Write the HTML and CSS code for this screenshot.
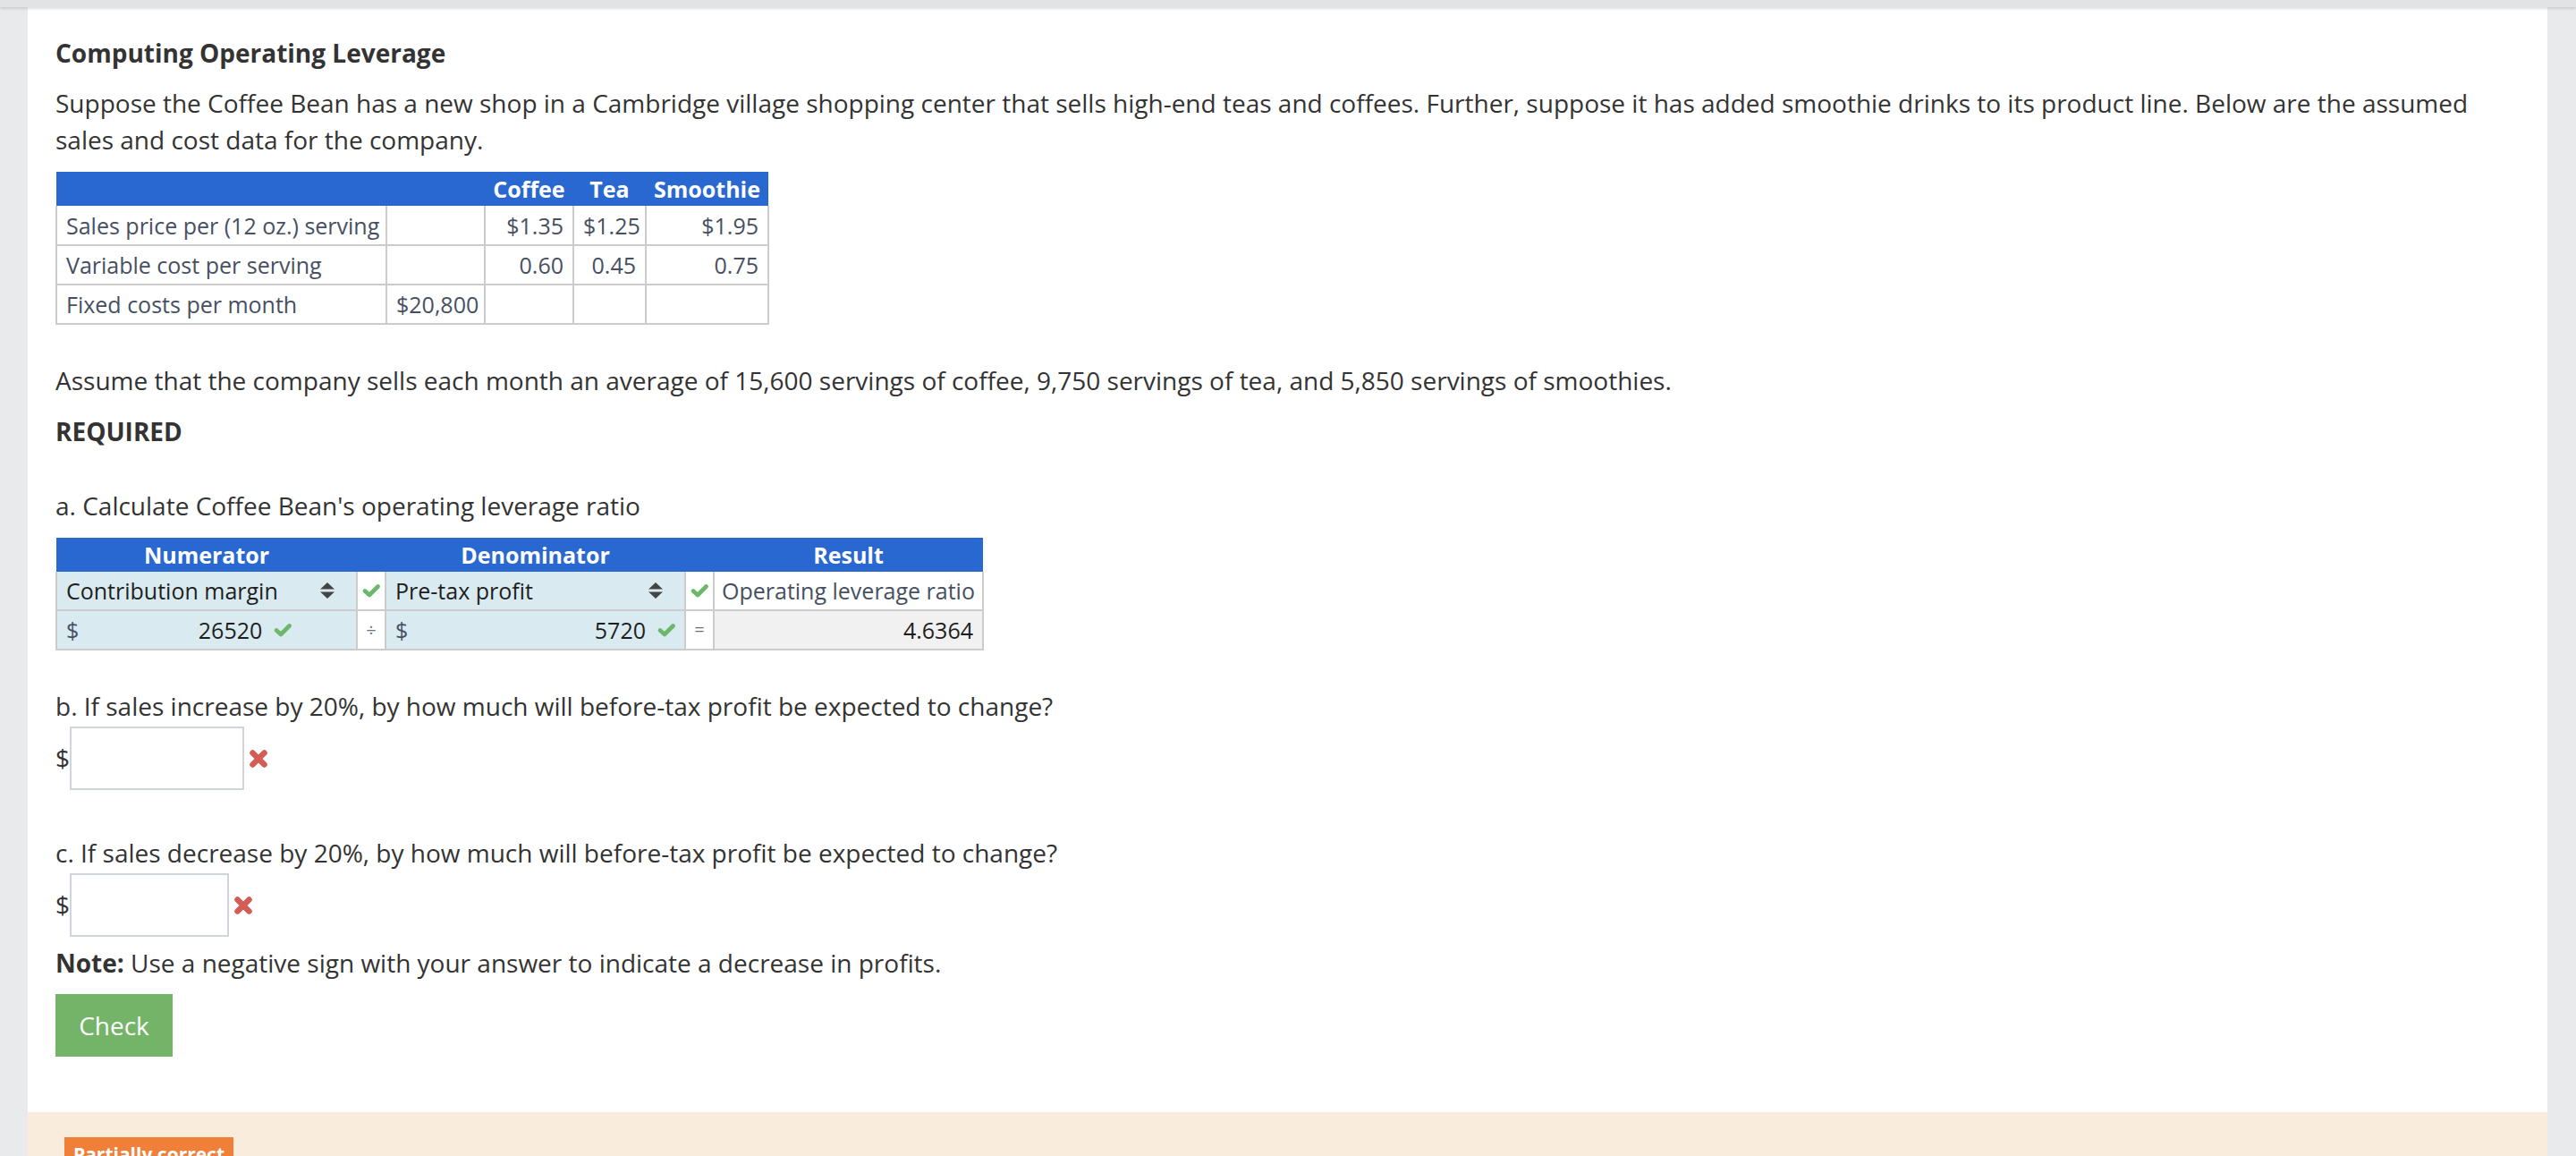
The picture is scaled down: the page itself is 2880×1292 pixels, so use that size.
FILE: index.html
```html
<!DOCTYPE html>
<html lang="en">
  <head>
    <meta charset="UTF-8" />
    <meta name="viewport" content="width=device-width, initial-scale=1.0" />
    <title>Computing Operating Leverage</title>

    <link rel="stylesheet" href="styles.css">
  </head>
  <body>
    <div class="topbar"></div>
    <div class="card">
      <h1 class="title">Computing Operating Leverage</h1>
      <p class="intro">
        Suppose the Coffee Bean has a new shop in a Cambridge village shopping center that sells high-end teas and
        coffees. Further, suppose it has added smoothie drinks to its product line. Below are the assumed sales and
        cost data for the company.
      </p>

      <table class="data">
        <colgroup>
          <col class="data__label" />
          <col class="data__fixed" />
          <col class="data__coffee" />
          <col class="data__tea" />
          <col class="data__smoothie" />
        </colgroup>
        <thead>
          <tr>
            <th></th>
            <th></th>
            <th>Coffee</th>
            <th>Tea</th>
            <th>Smoothie</th>
          </tr>
        </thead>
        <tbody>
          <tr>
            <td>Sales price per (12 oz.) serving</td>
            <td></td>
            <td class="num">$1.35</td>
            <td class="num">$1.25</td>
            <td class="num">$1.95</td>
          </tr>
          <tr>
            <td>Variable cost per serving</td>
            <td></td>
            <td class="num">0.60</td>
            <td class="num">0.45</td>
            <td class="num">0.75</td>
          </tr>
          <tr>
            <td>Fixed costs per month</td>
            <td class="num">$20,800</td>
            <td></td>
            <td></td>
            <td></td>
          </tr>
        </tbody>
      </table>

      <p class="assume">
        Assume that the company sells each month an average of 15,600 servings of coffee, 9,750 servings of tea, and
        5,850 servings of smoothies.
      </p>
      <p class="required">REQUIRED</p>

      <p class="question question--a">a. Calculate Coffee Bean's operating leverage ratio</p>

      <table class="calc">
        <colgroup>
          <col class="calc__wide" />
          <col class="calc__op" />
          <col class="calc__wide2" />
          <col class="calc__op" />
          <col class="calc__result" />
        </colgroup>
        <thead>
          <tr>
            <th>Numerator</th>
            <th></th>
            <th>Denominator</th>
            <th></th>
            <th>Result</th>
          </tr>
        </thead>
        <tbody>
          <tr class="calc__labels">
            <td class="cell-input">
              <div class="select">
                <span>Contribution margin</span>
                <svg class="select__arrows" viewBox="0 0 16 18" width="16" height="18">
                  <polygon points="8,0 16,7.5 0,7.5" />
                  <polygon points="0,10.5 16,10.5 8,18" />
                </svg>
              </div>
            </td>
            <td class="cell-op">
              <svg class="check" viewBox="0 0 20 15" width="20" height="15">
                <path d="M3 7.5 L8 12 L17.5 2.5" />
              </svg>
            </td>
            <td class="cell-input">
              <div class="select">
                <span>Pre-tax profit</span>
                <svg class="select__arrows" viewBox="0 0 16 18" width="16" height="18">
                  <polygon points="8,0 16,7.5 0,7.5" />
                  <polygon points="0,10.5 16,10.5 8,18" />
                </svg>
              </div>
            </td>
            <td class="cell-op">
              <svg class="check" viewBox="0 0 20 15" width="20" height="15">
                <path d="M3 7.5 L8 12 L17.5 2.5" />
              </svg>
            </td>
            <td class="cell-result-label">Operating leverage ratio</td>
          </tr>
          <tr class="calc__values">
            <td class="cell-input">
              <div class="amount">
                <span class="amount__cur">$</span>
                <span class="amount__value amount__value--num">26520</span>
                <svg class="check" viewBox="0 0 20 15" width="20" height="15">
                  <path d="M3 7.5 L8 12 L17.5 2.5" />
                </svg>
              </div>
            </td>
            <td class="cell-op">÷</td>
            <td class="cell-input">
              <div class="amount">
                <span class="amount__cur">$</span>
                <span class="amount__value">5720</span>
                <svg class="check" viewBox="0 0 20 15" width="20" height="15">
                  <path d="M3 7.5 L8 12 L17.5 2.5" />
                </svg>
              </div>
            </td>
            <td class="cell-op">=</td>
            <td class="cell-result">4.6364</td>
          </tr>
        </tbody>
      </table>

      <p class="question question--b">b. If sales increase by 20%, by how much will before-tax profit be expected to change?</p>
      <div class="answer">
        <span class="answer__cur">$</span>
        <input class="answer__input" type="text" />
        <svg class="cross" viewBox="0 0 22 22" width="22" height="22">
          <path d="M4.5 4.5 L17.5 17.5 M17.5 4.5 L4.5 17.5" />
        </svg>
      </div>

      <p class="question question--c">c. If sales decrease by 20%, by how much will before-tax profit be expected to change?</p>
      <div class="answer answer--last">
        <span class="answer__cur">$</span>
        <input class="answer__input answer__input--short" type="text" />
        <svg class="cross" viewBox="0 0 22 22" width="22" height="22">
          <path d="M4.5 4.5 L17.5 17.5 M17.5 4.5 L4.5 17.5" />
        </svg>
      </div>

      <p class="note"><strong>Note:</strong> Use a negative sign with your answer to indicate a decrease in profits.</p>

      <div class="actions">
        <button class="button">Check</button>
      </div>

      <div class="feedback">
        <span class="badge">Partially correct</span>
      </div>
    </div>
  </body>
</html>
```

FILE: styles.css
```css
:root {
  --clr-page: #e9eaec;
  --clr-text: #333333;
  --clr-slate: #465062;
  --clr-blue: #2968d0;
  --clr-cell: #d9ebf1;
  --clr-border: #cccccc;
  --clr-green: #6cb86a;
  --clr-red: #d35d56;
}

* {
  margin: 0;
  box-sizing: border-box;
}

body {
  font-family: "Open Sans", "Noto Sans", sans-serif;
  font-size: 28px;
  line-height: 41px;
  color: var(--clr-text);
  background: var(--clr-page);
  overflow: hidden;
}

.topbar {
  height: 8px;
  background: #e2e3e5;
  box-shadow: 0 2px 3px rgba(0, 0, 0, 0.12);
  position: relative;
  z-index: 1;
}

.card {
  margin: 0 32px 0 31px;
  padding: 32px 31px 0;
  background: #fff;
  min-height: 1300px;
}

.title {
  font-size: 28px;
  line-height: 38px;
  font-weight: 700;
  margin-bottom: 17px;
}

.intro {
  margin-bottom: 15px;
}

/* data table */

table {
  border-collapse: collapse;
  table-layout: fixed;
}

th {
  background: var(--clr-blue);
  color: #fff;
  font-weight: 700;
  text-align: center;
  padding: 0 6px;
}

td {
  border: 2px solid var(--clr-border);
  padding: 0 10px;
  white-space: nowrap;
}

.data {
  width: 796px;
  font-size: 25px;
  line-height: 32px;
  color: var(--clr-slate);
  margin-bottom: 42px;
}

.data thead tr {
  height: 38px;
}

.data tbody tr {
  height: 44px;
}

.data tbody tr:first-child td {
  border-top: 0;
}

.data__label { width: 369px; }
.data__fixed { width: 110px; }
.data__coffee { width: 99px; }
.data__tea { width: 81px; }
.data__smoothie { width: 137px; }

.num {
  text-align: right;
}

.assume {
  margin-bottom: 16px;
}

.required {
  font-weight: 700;
  margin-bottom: 42px;
}

.question--a {
  margin-bottom: 15px;
}

/* calculation table */

.calc {
  width: 1036px;
  font-size: 25px;
  line-height: 32px;
  margin-bottom: 42px;
}

.calc thead tr {
  height: 38px;
}

.calc__labels {
  height: 43px;
}

.calc__values {
  height: 44px;
}

.calc tbody tr:first-child td {
  border-top: 0;
}

.calc__wide { width: 336px; }
.calc__op { width: 32px; }
.calc__wide2 { width: 335px; }
.calc__result { width: 301px; }

.cell-input {
  background: var(--clr-cell);
  color: #1e1e1e;
}

.cell-op {
  padding: 0;
  text-align: center;
  color: #6a7280;
  font-size: 20px;
}

.cell-op .check {
  display: block;
  margin: 0 auto;
}

.cell-result-label {
  color: var(--clr-slate);
  padding-left: 8px;
}

.cell-result {
  background: #f1f1f1;
  text-align: right;
  color: #1e1e1e;
}

.select {
  display: flex;
  align-items: center;
  justify-content: space-between;
  padding-right: 14px;
}

.select__arrows {
  fill: #444;
}

.check {
  fill: none;
  stroke: var(--clr-green);
  stroke-width: 4.6;
  stroke-linecap: round;
  stroke-linejoin: round;
}

.amount {
  display: flex;
  align-items: center;
  gap: 13px;
}

.amount__cur {
  color: var(--clr-slate);
}

.amount__value {
  flex: 1;
  text-align: right;
}

.amount__value--num {
  flex: 0 0 192px;
}

/* answers */

.question--b,
.question--c {
  margin-bottom: 2px;
}

.answer {
  display: flex;
  align-items: center;
  margin-bottom: 50px;
}

.answer--last {
  margin-bottom: 9px;
}

.answer__cur {
  width: 16px;
}

.answer__input {
  width: 195px;
  height: 71px;
  border: 2px solid #d0d5db;
  background: #fff;
  font: inherit;
}

.answer__input--short {
  width: 178px;
}

.cross {
  margin-left: 5px;
  fill: none;
  stroke: var(--clr-red);
  stroke-width: 6.5;
  stroke-linecap: round;
}

.note {
  margin-bottom: 14px;
}

.note strong {
  font-weight: 700;
}

.actions {
  padding-bottom: 62px;
}

.button {
  font: inherit;
  height: 70px;
  width: 131px;
  border: 0;
  border-radius: 0;
  background: #74b469;
  color: #fff;
  cursor: pointer;
}

.feedback {
  margin: 0 -31px;
  padding: 24px 41px 60px;
  background: #faecdc;
}

.badge {
  display: inline-block;
  font-size: 21px;
  line-height: 34px;
  font-weight: 700;
  color: #fff;
  background: #f07f38;
  padding: 2px 10px 4px;
}
```
